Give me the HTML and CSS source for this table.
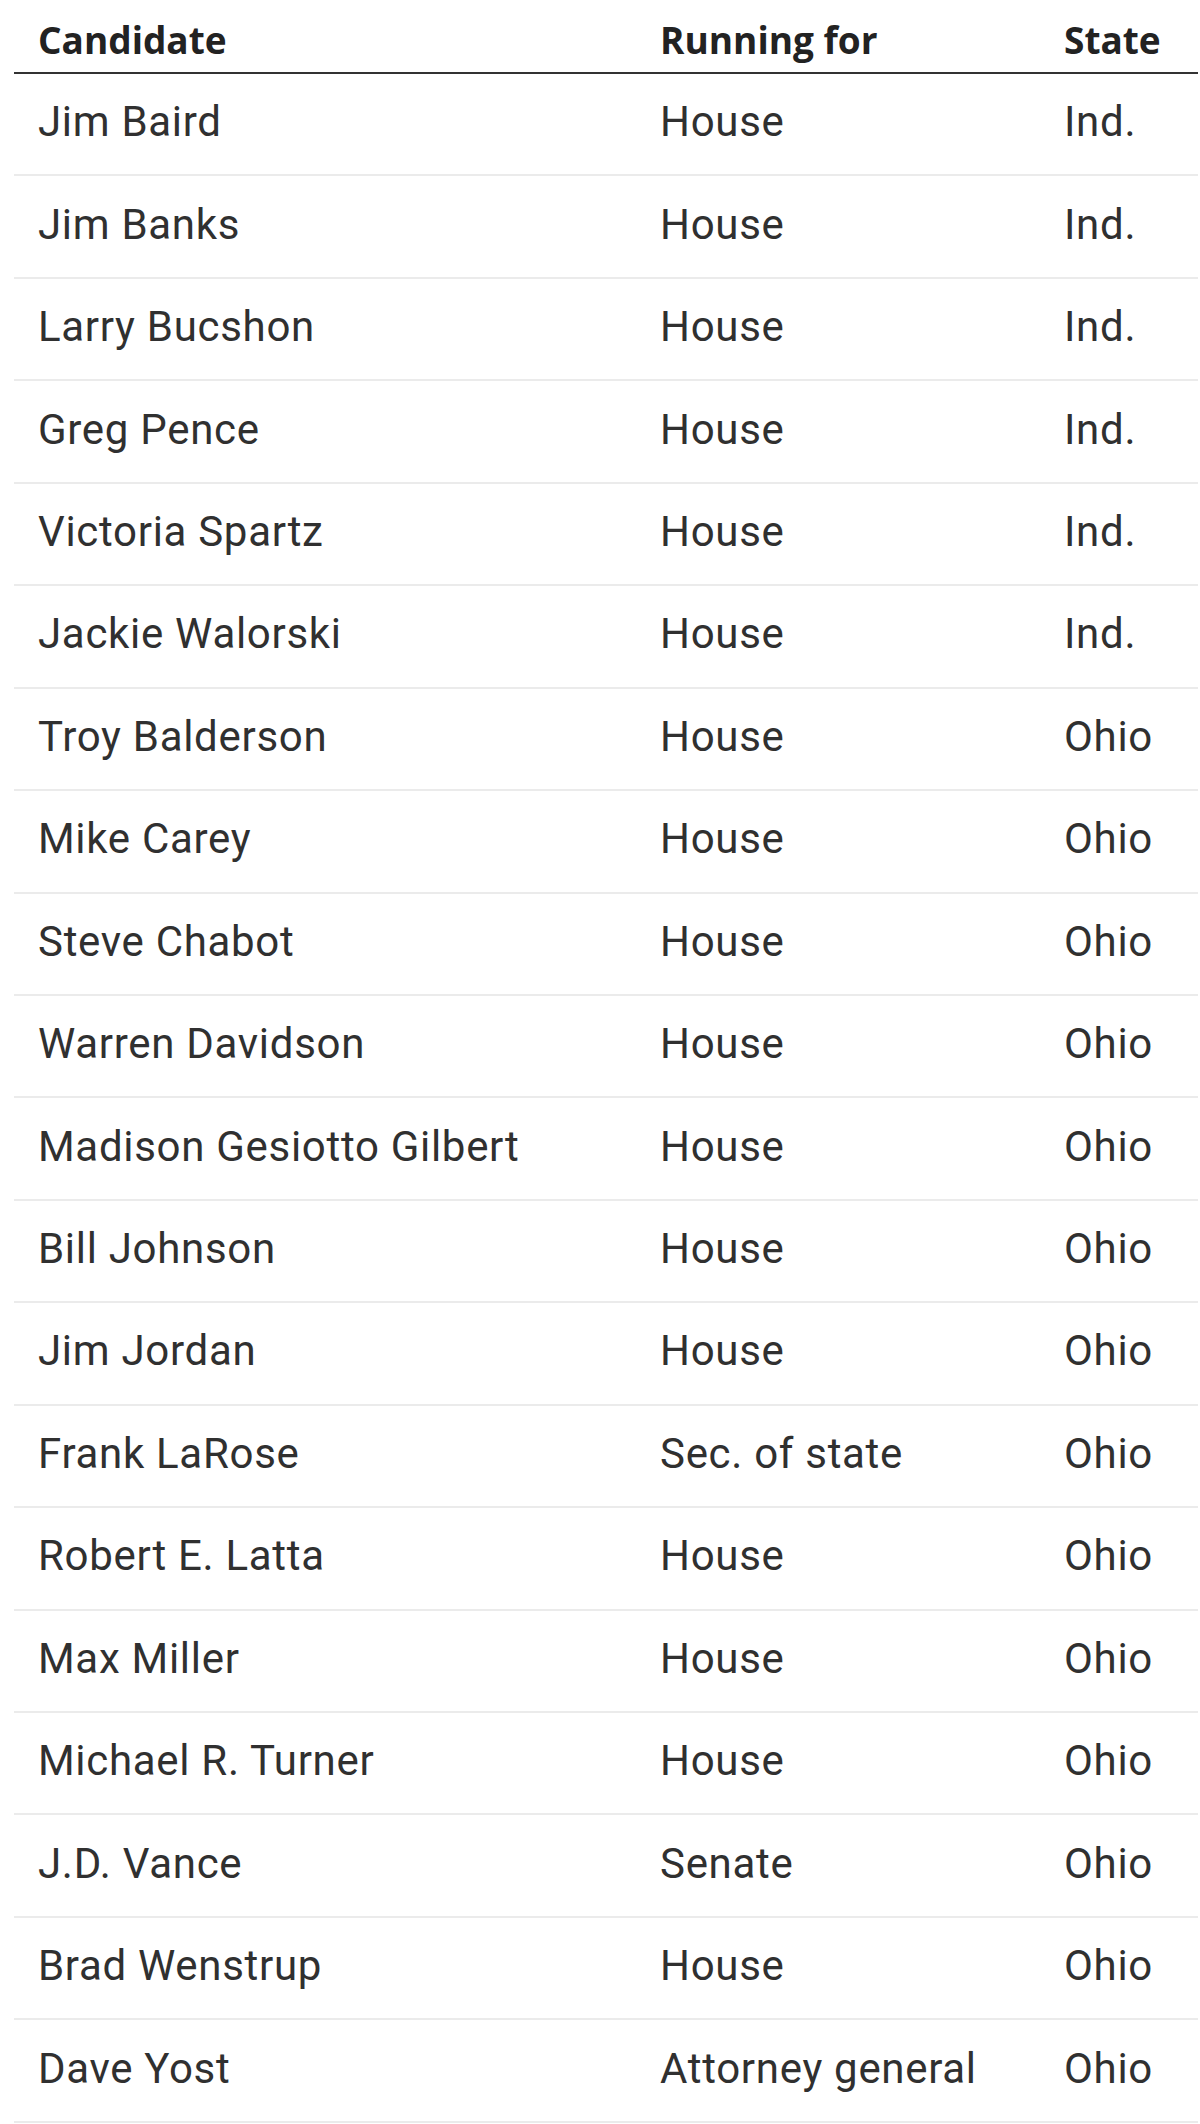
FILE: index.html
```html
<!DOCTYPE html>
<html lang="en">
<head>
    <meta charset="UTF-8">
    <title>Candidates</title>
    <link rel="stylesheet" href="styles.css">
</head>
<body>

<table class="candidates">
    <colgroup>
        <col class="col-name">
        <col class="col-office">
        <col class="col-state">
    </colgroup>
    <thead>
        <tr>
            <th>Candidate</th>
            <th>Running for</th>
            <th>State</th>
        </tr>
    </thead>
    <tbody>
        <tr><td>Jim Baird</td><td>House</td><td>Ind.</td></tr>
        <tr><td>Jim Banks</td><td>House</td><td>Ind.</td></tr>
        <tr><td>Larry Bucshon</td><td>House</td><td>Ind.</td></tr>
        <tr><td>Greg Pence</td><td>House</td><td>Ind.</td></tr>
        <tr><td>Victoria Spartz</td><td>House</td><td>Ind.</td></tr>
        <tr><td>Jackie Walorski</td><td>House</td><td>Ind.</td></tr>
        <tr><td>Troy Balderson</td><td>House</td><td>Ohio</td></tr>
        <tr><td>Mike Carey</td><td>House</td><td>Ohio</td></tr>
        <tr><td>Steve Chabot</td><td>House</td><td>Ohio</td></tr>
        <tr><td>Warren Davidson</td><td>House</td><td>Ohio</td></tr>
        <tr><td>Madison Gesiotto Gilbert</td><td>House</td><td>Ohio</td></tr>
        <tr><td>Bill Johnson</td><td>House</td><td>Ohio</td></tr>
        <tr><td>Jim Jordan</td><td>House</td><td>Ohio</td></tr>
        <tr><td>Frank LaRose</td><td>Sec. of state</td><td>Ohio</td></tr>
        <tr><td>Robert E. Latta</td><td>House</td><td>Ohio</td></tr>
        <tr><td>Max Miller</td><td>House</td><td>Ohio</td></tr>
        <tr><td>Michael R. Turner</td><td>House</td><td>Ohio</td></tr>
        <tr><td>J.D. Vance</td><td>Senate</td><td>Ohio</td></tr>
        <tr><td>Brad Wenstrup</td><td>House</td><td>Ohio</td></tr>
        <tr><td>Dave Yost</td><td>Attorney general</td><td>Ohio</td></tr>
    </tbody>
</table>

</body>
</html>
```

FILE: styles.css
```css
body {
    margin: 0;
    padding: 0 2px 0 14px;
    background: #ffffff;
    font-family: Roboto, "Liberation Sans", sans-serif;
    color: #303030;
}
.candidates {
    width: 100%;
    border-collapse: separate;
    border-spacing: 0;
    table-layout: fixed;
}
.col-name {
    width: 622px;
}
.col-office {
    width: 404px;
}
.candidates th {
    height: 58px;
    padding: 0 0 14px 24px;
    text-align: left;
    vertical-align: bottom;
    font-family: "Open Sans", Roboto, sans-serif;
    font-size: 37px;
    font-weight: bold;
    line-height: 1;
    color: #222222;
    border-bottom: 2px solid #333333;
}
.candidates td {
    height: 96.45px;
    padding: 0 0 4px 24px;
    vertical-align: middle;
    font-size: 42px;
    letter-spacing: 0.7px;
    line-height: 1;
    border-bottom: 2px solid #ebebeb;
    white-space: nowrap;
}
```
